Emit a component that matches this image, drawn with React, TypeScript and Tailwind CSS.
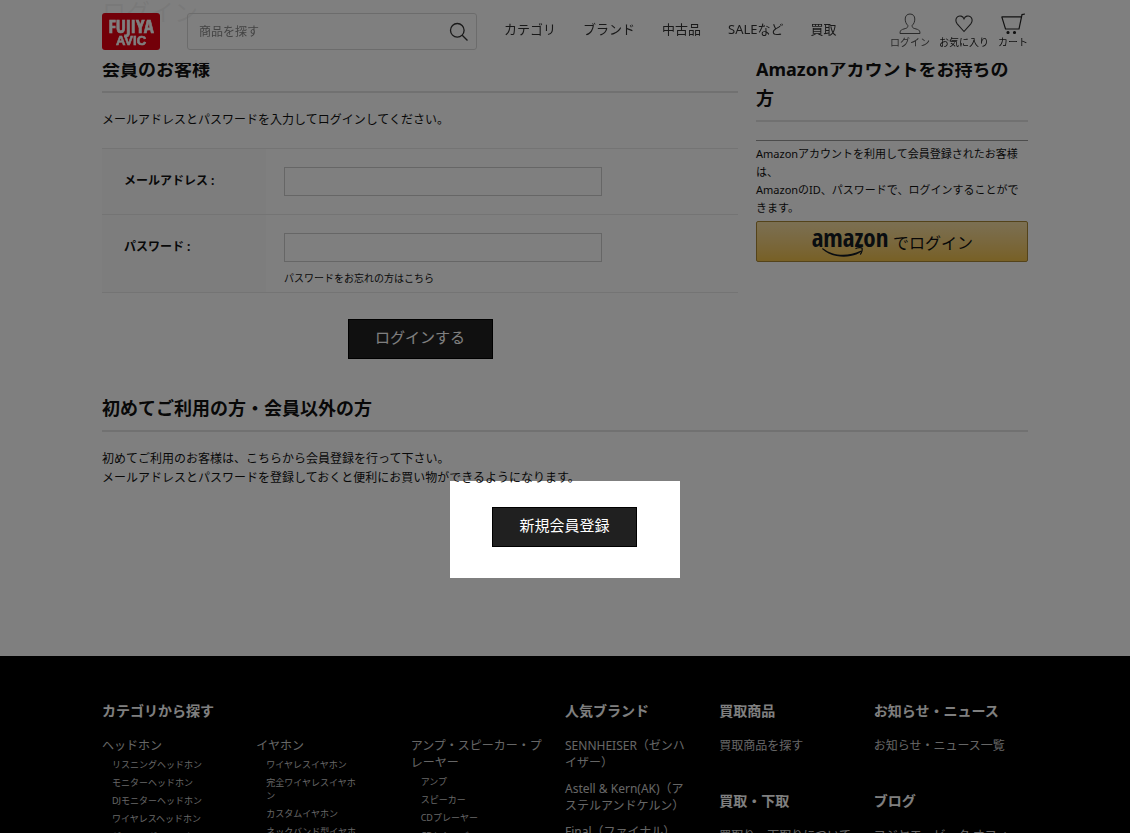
import React from 'react';

interface CategoryGroup {
  title: string;
  items: string[];
}

interface LinkGroup {
  title: string;
  items: string[];
}

const navItems = ['カテゴリ', 'ブランド', '中古品', 'SALEなど', '買取'];

const categories: CategoryGroup[] = [
  {
    title: 'ヘッドホン',
    items: ['リスニングヘッドホン', 'モニターヘッドホン', 'DJモニターヘッドホン', 'ワイヤレスヘッドホン', 'ゲーミングヘッドホン'],
  },
  {
    title: 'イヤホン',
    items: ['ワイヤレスイヤホン', '完全ワイヤレスイヤホン', 'カスタムイヤホン', 'ネックバンド型イヤホン'],
  },
  {
    title: 'アンプ・スピーカー・プレーヤー',
    items: ['アンプ', 'スピーカー', 'CDプレーヤー', 'CDレシーバー'],
  },
];

const brands = ['SENNHEISER（ゼンハイザー）', 'Astell & Kern(AK)（アステルアンドケルン）', 'Final（ファイナル）'];

const purchaseLinks: LinkGroup[] = [
  { title: '買取商品', items: ['買取商品を探す'] },
  { title: '買取・下取', items: ['買取り・下取りについて'] },
];

const newsLinks: LinkGroup[] = [
  { title: 'お知らせ・ニュース', items: ['お知らせ・ニュース一覧'] },
  { title: 'ブログ', items: ['フジヤエービック オフィシャルブログ'] },
];

const Logo = () => (
  <a href="#" aria-label="FUJIYA AVIC" className="block shrink-0">
    <svg width="58" height="37" viewBox="0 0 58 37" fill="#fff" stroke="#fff" strokeWidth="0.6" fontWeight="700" textAnchor="middle">
      <rect width="58" height="37" rx="3" fill="#e60012" stroke="none" />
      <text x="29" y="20" fontSize="18" fontFamily="'Liberation Sans Narrow', 'Open Sans Condensed', sans-serif">FUJIYA</text>
      <text x="29" y="32" fontSize="13" fontFamily="'Liberation Sans', sans-serif">AVIC</text>
    </svg>
  </a>
);

const SearchIcon = () => (
  <svg width="20" height="20" viewBox="0 0 20 20" fill="none" stroke="#333" strokeWidth="1.3">
    <circle cx="8.3" cy="8.3" r="6.8" />
    <path d="M13.2 13.2l5.3 5.3" />
  </svg>
);

const UserIcon = () => (
  <svg width="22" height="22" viewBox="0 0 22 22" fill="none" stroke="#555" strokeWidth="1">
    <path d="M11 1C8 1 6.2 3 6.2 6c0 2.500 .9 5 2.600 6.300.2 1.800-.4 2.600-2 3.100l-3.300 1C1.800 17 1 18 1 20.500h20c0-2.500-.8-3.500-2.500-4.100l-3.300-1c-1.600-.5-2.200-1.300-2-3.100C14.900 11 15.800 8.500 15.800 6c0-3-1.800-5-4.800-5z" />
  </svg>
);

const HeartIcon = () => (
  <svg width="18" height="22" viewBox="0 0 18 22" fill="none" stroke="#333" strokeWidth="1.1">
    <path d="M9 18.500L2.200 10.800C.2 8.400.6 5.300 2.400 3.900 4.700 2.100 7.800 3 9 5.900c1.200-2.900 4.300-3.800 6.600-2 1.800 1.400 2.200 4.500.2 6.900z" />
  </svg>
);

const CartIcon = () => (
  <svg width="24" height="22" viewBox="0 0 24 22" fill="none" stroke="#222" strokeWidth="1.200">
    <path d="M.5 3.800h19.800M.8 3.800L4.500 16h13.500L21 1.600 24 1" />
    <circle cx="7" cy="19.500" r="1" fill="#222" />
    <circle cx="13.500" cy="19.500" r="1" fill="#222" />
  </svg>
);

const Header = () => (
  <header className="fixed inset-x-0 top-0 z-10 h-[63px] bg-white/95">
    <div className="mx-auto flex w-full max-w-[926px] items-start pt-[13px]">
      <Logo />
      <form className="ml-[27px] flex h-[37px] w-[290px] items-center rounded-[3px] border border-[#d8d8d8] pr-[7px] pl-[11px]">
        <input type="search" aria-label="商品を探す" placeholder="商品を探す" className="min-w-0 flex-1 bg-transparent text-xs placeholder:text-[#888] focus:outline-none" />
        <button type="button" aria-label="検索">
          <SearchIcon />
        </button>
      </form>
      <nav className="ml-[27px] flex h-[34px] items-center gap-[27px] text-[13px] whitespace-nowrap text-[#333]">
        {navItems.map((item) => (
          <a key={item} href="#">{item}</a>
        ))}
      </nav>
      <div className="ml-auto flex gap-[9px] text-[10px] leading-[15px] whitespace-nowrap text-[#222]">
        <a href="#" className="flex flex-col items-center text-[#555]">
          <UserIcon />
          <span>ログイン</span>
        </a>
        <a href="#" className="flex flex-col items-center">
          <HeartIcon />
          <span>お気に入り</span>
        </a>
        <a href="#" className="flex flex-col items-center">
          <CartIcon />
          <span>カート</span>
        </a>
      </div>
    </div>
  </header>
);

const SectionTitle = ({ children }: { children: React.ReactNode }) => (
  <h2 className="border-b-2 border-[#e3e3e3] pr-2 pb-[7px] text-lg leading-[29px] font-bold">{children}</h2>
);

const buttonClass = 'block h-10 w-[145px] border border-black bg-[#202020] pb-[3px] text-[15px] text-white';

const LoginForm = () => (
  <form>
    <table className="mt-[18px] w-full border-collapse text-xs">
      <tbody>
        <tr className="h-[66px] border-y border-[#e9e9e9] align-top">
          <th className="w-[164px] bg-[#fafafa] pt-6 pl-[22px] text-left font-bold">
            <label htmlFor="email">メールアドレス :</label>
          </th>
          <td className="pt-[18px] pl-[18px]">
            <input id="email" type="email" className="block h-[29px] w-[318px] max-w-full border border-[#ccc] px-2" />
          </td>
        </tr>
        <tr className="h-[78px] border-b border-[#e9e9e9] align-top">
          <th className="bg-[#fafafa] pt-6 pl-[22px] text-left font-bold">
            <label htmlFor="password">パスワード :</label>
          </th>
          <td className="pt-[18px] pl-[18px]">
            <input id="password" type="password" className="block h-[29px] w-[318px] max-w-full border border-[#ccc] px-2" />
            <a href="#" className="mt-2 block text-[10px] leading-4">パスワードをお忘れの方はこちら</a>
          </td>
        </tr>
      </tbody>
    </table>
    <button type="button" className={`${buttonClass} mx-auto mt-[26px]`}>ログインする</button>
  </form>
);

const AmazonLogin = () => (
  <aside className="w-[272px] shrink-0">
    <SectionTitle>Amazonアカウントをお持ちの方</SectionTitle>
    <div className="mt-[18px] border-t border-[#999] pt-1 text-[11px] leading-[18px]">
      <p>
        Amazonアカウントを利用して会員登録されたお客様は、
        <br />
        AmazonのID、パスワードで、ログインすることができます。
      </p>
      <button type="button" className="mt-1 flex h-[41px] w-full items-start justify-center rounded-[2px] border border-[#a88734] bg-linear-to-b from-[#f7dfa5] to-[#f0c14b] text-[#111]">
        <svg width="78" height="39" viewBox="0 0 78 39" className="shrink-0">
          <text x="39" y="25" fontSize="25" fontWeight="700" fontFamily="'Open Sans Condensed', 'Liberation Sans Narrow', sans-serif" textAnchor="middle" fill="#131a22">amazon</text>
          <path d="M12 26.300c10 8 25 8.500 37.500 2.500.8-.4 1.400.3.700.9C39 37.500 21 36 11.300 27.300c-.6-.6 0-1.500.7-1z" fill="#131a22" />
          <path d="M44.500 26.800c2-1.300 5.500-1.500 6.400-.8.800.8 0 4.500-1.700 6.500" fill="none" stroke="#131a22" strokeWidth="1.300" />
        </svg>
        <span className="ml-1 pt-[11px] text-base leading-5">でログイン</span>
      </button>
    </div>
  </aside>
);

const LinkColumn = ({ groups, listClass = 'pr-4' }: { groups: LinkGroup[]; listClass?: string }) => (
  <div className="flex flex-col gap-[37px]">
    {groups.map((group) => (
      <section key={group.title}>
        <h3 className="text-sm leading-5 font-bold text-white">{group.title}</h3>
        <ul className={`mt-4 flex flex-col gap-[9px] ${listClass}`}>
          {group.items.map((item) => (
            <li key={item}><a href="#">{item}</a></li>
          ))}
        </ul>
      </section>
    ))}
  </div>
);

const Footer = () => (
  <footer className="mt-[78px] bg-black pt-[45px] pb-16 text-xs leading-[17px] text-[#ccc]">
    <div className="mx-auto grid w-full max-w-[926px] grid-cols-6">
      <section className="col-span-3">
        <h3 className="text-sm leading-5 font-bold text-white">カテゴリから探す</h3>
        <div className="mt-4 grid grid-cols-3">
          {categories.map((category) => (
            <div key={category.title} className="pr-4">
              <a href="#">{category.title}</a>
              <ul className="mt-1 flex flex-col gap-[5px] pr-8 pl-[10px] text-[9px] leading-[13px]">
                {category.items.map((item) => (
                  <li key={item}><a href="#">{item}</a></li>
                ))}
              </ul>
            </div>
          ))}
        </div>
      </section>
      <LinkColumn groups={[{ title: '人気ブランド', items: brands }]} listClass="pr-7" />
      <LinkColumn groups={purchaseLinks} />
      <LinkColumn groups={newsLinks} />
    </div>
  </footer>
);

const App: React.FC = () => (
  <div lang="ja" className="relative h-screen overflow-hidden bg-white font-['Noto_Sans','Noto_Sans_CJK_JP',sans-serif] text-[#111]">
    <Header />
    <main className="mx-auto w-full max-w-[926px]">
      <h1 className="mb-[31px] text-2xl leading-6">ログイン</h1>
      <div className="flex gap-[18px]">
        <section className="min-w-0 flex-1">
          <SectionTitle>会員のお客様</SectionTitle>
          <p className="mt-[17px] text-xs leading-5">メールアドレスとパスワードを入力してログインしてください。</p>
          <LoginForm />
        </section>
        <AmazonLogin />
      </div>
      <section className="mt-[35px]">
        <SectionTitle>初めてご利用の方・会員以外の方</SectionTitle>
        <p className="mt-[17px] text-xs leading-[19px]">
          初めてご利用のお客様は、こちらから会員登録を行って下さい。
          <br />
          メールアドレスとパスワードを登録しておくと便利にお買い物ができるようになります。
        </p>
        {/* the huge shadow dims everything around the registration button */}
        <div className="relative z-20 mx-auto -mt-[6px] w-[230px] px-[42px] pt-[26px] pb-[31px] shadow-[0_0_0_9999px_rgba(0,0,0,0.5)]">
          <button type="button" className={buttonClass}>新規会員登録</button>
        </div>
      </section>
    </main>
    <Footer />
  </div>
);

export default App;
